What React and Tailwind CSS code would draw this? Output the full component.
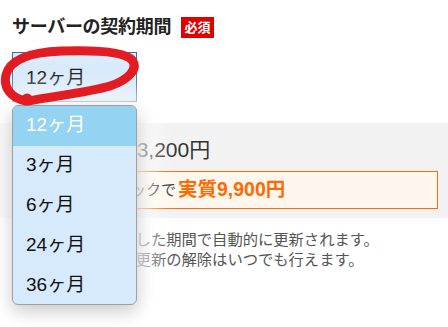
import React from "react";

const items = ["12ヶ月", "3ヶ月", "6ヶ月", "24ヶ月", "36ヶ月"];

export default function App() {
  return (
    <div
      className="relative w-[448px] h-[327px] overflow-hidden bg-white text-[#222]"
      style={{ fontFamily: '"Liberation Sans", "Noto Sans CJK JP", sans-serif' }}
    >
      {/* title */}
      <div className="flex items-center gap-[10px] pl-[12px] pt-[17px] h-[38px]">
        <span className="text-[18px] font-bold leading-[21px] tracking-[-0.3px] text-[#222]">
          サーバーの契約期間
        </span>
        <span className="flex items-center justify-center w-[33px] h-[21px] bg-[#e00000] text-white text-[13px] font-bold leading-none">
          必須
        </span>
      </div>

      {/* select */}
      <div className="ml-[12px] mt-[14px] w-[125px] h-[50px] border border-[#3c6fa6] bg-gradient-to-b from-[#dcedfc] to-[#cfe3f7] flex items-center pl-[13px]">
        <span className="text-[19px] leading-none text-[#111]">12ヶ月</span>
      </div>

      {/* gray section */}
      <div className="mt-[21px] h-[95px] bg-[#f2f2f2] pl-[20px] pr-[10px] pt-[14px]">
        <div className="pl-[105px] text-[21px] leading-[26px] text-[#333]">13,200円</div>
        <div className="mt-[8px] h-[38px] border-[1.5px] border-[#ff6a00] bg-[#fff7ee] flex items-center pl-[20px]">
          <span className="text-[15px] text-[#333]">キャッシュバックで</span>
          <span className="ml-[2px] text-[19.5px] font-bold text-[#ff6a00]">実質9,900円</span>
        </div>
      </div>

      {/* notes */}
      <div className="pl-[105px] pt-[12px] text-[15.3px] leading-[20px] text-[#555]">
        <p>選択した期間で自動的に更新されます。</p>
        <p>自動更新の解除はいつでも行えます。</p>
      </div>

      {/* dropdown */}
      <div className="absolute left-[12px] top-[105px] w-[125px] h-[200px] rounded-[6px] border border-[#a0a0a0] bg-[#d6eafc] overflow-hidden shadow-[0_6px_18px_rgba(0,0,0,0.22),0_0_28px_14px_rgba(255,255,255,0.9)]">
        {items.map((t, i) => (
          <div
            key={t}
            className={
              "h-[40px] flex items-center pl-[13px] pb-[4px] text-[19px] leading-none " +
              (i === 0 ? "bg-[#95d3f2] text-white" : "text-[#111]")
            }
          >
            {t}
          </div>
        ))}
      </div>

      {/* red annotation */}
      <svg
        className="absolute left-0 top-0 pointer-events-none"
        width="150"
        height="115"
        viewBox="0 0 150 115"
      >
        <path
          d="M 26 101 C 11 98, 3 88, 6 75 C 10 59, 32 52, 62 51 C 92 50, 124 51, 132 60 C 139 69, 128 80, 110 86 C 90 92, 55 96, 28 101"
          fill="none"
          stroke="#e31b23"
          strokeWidth="9"
          strokeLinecap="round"
          strokeLinejoin="round"
        />
        <circle cx="27" cy="99" r="5.5" fill="#e31b23" />
      </svg>
    </div>
  );
}
